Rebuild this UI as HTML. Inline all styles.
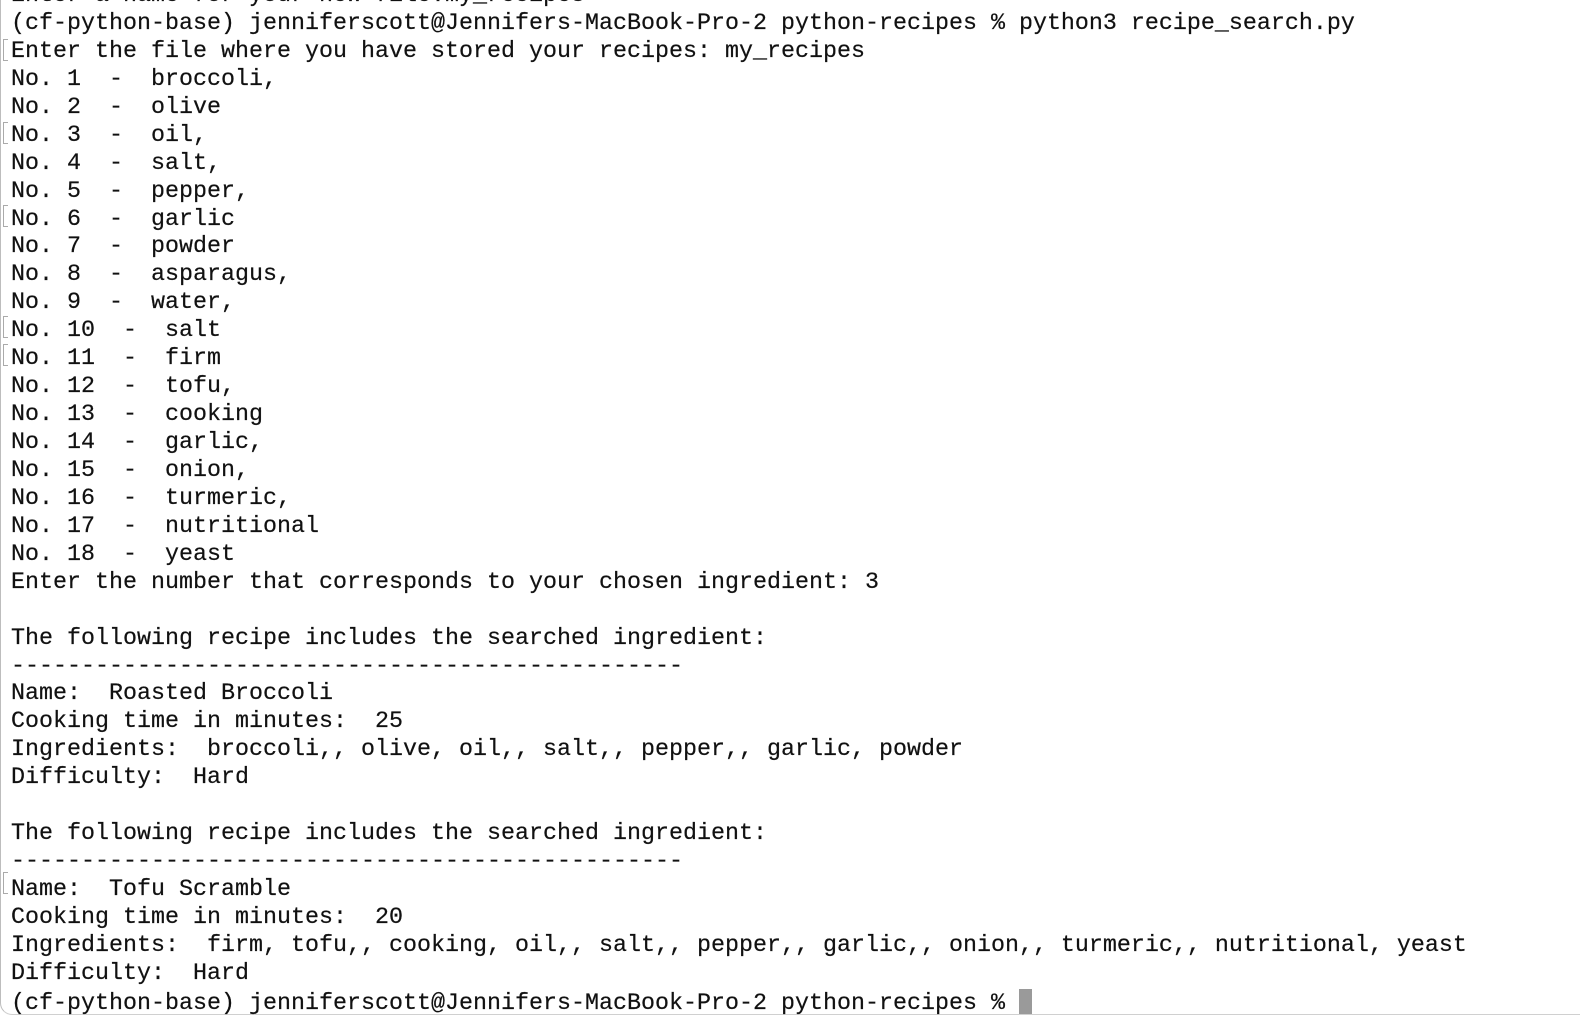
<!DOCTYPE html>
<html><head><meta charset="utf-8"><style>
html,body{margin:0;padding:0;background:#fff;width:1580px;height:1023px;overflow:hidden}
.frame{position:absolute;left:0;top:-20px;width:1600px;height:1034px;border-left:1.5px solid #bdbdbd;border-bottom:1.5px solid #d0d0d0;border-bottom-left-radius:12px}
pre{position:absolute;left:11px;top:-17px;margin:0;font-family:"Liberation Mono",monospace;font-size:23.34px;line-height:27.94px;color:#111;white-space:pre;-webkit-text-stroke:0.2px #111}
.cur{display:inline-block;width:13px;height:25px;background:#9a9a9a;vertical-align:-5px}
.br{position:absolute;left:3px;width:4px;height:20px;border:1.5px solid #aaa;border-right:none}
</style></head><body>
<div class="frame"></div>
<pre>Enter a name for your new file:my_recipes
(cf-python-base) jenniferscott@Jennifers-MacBook-Pro-2 python-recipes % python3 recipe_search.py
Enter the file where you have stored your recipes: my_recipes
No. 1  -  broccoli,
No. 2  -  olive
No. 3  -  oil,
No. 4  -  salt,
No. 5  -  pepper,
No. 6  -  garlic
No. 7  -  powder
No. 8  -  asparagus,
No. 9  -  water,
No. 10  -  salt
No. 11  -  firm
No. 12  -  tofu,
No. 13  -  cooking
No. 14  -  garlic,
No. 15  -  onion,
No. 16  -  turmeric,
No. 17  -  nutritional
No. 18  -  yeast
Enter the number that corresponds to your chosen ingredient: 3

The following recipe includes the searched ingredient:
------------------------------------------------
Name:  Roasted Broccoli
Cooking time in minutes:  25
Ingredients:  broccoli,, olive, oil,, salt,, pepper,, garlic, powder
Difficulty:  Hard

The following recipe includes the searched ingredient:
------------------------------------------------
Name:  Tofu Scramble
Cooking time in minutes:  20
Ingredients:  firm, tofu,, cooking, oil,, salt,, pepper,, garlic,, onion,, turmeric,, nutritional, yeast
Difficulty:  Hard
(cf-python-base) jenniferscott@Jennifers-MacBook-Pro-2 python-recipes % <span class="cur"></span></pre>
<div class="br" style="top:39px"></div>
<div class="br" style="top:122px"></div>
<div class="br" style="top:205px"></div>
<div class="br" style="top:316px"></div>
<div class="br" style="top:344px"></div>
<div class="br" style="top:872px"></div>
</body></html>
